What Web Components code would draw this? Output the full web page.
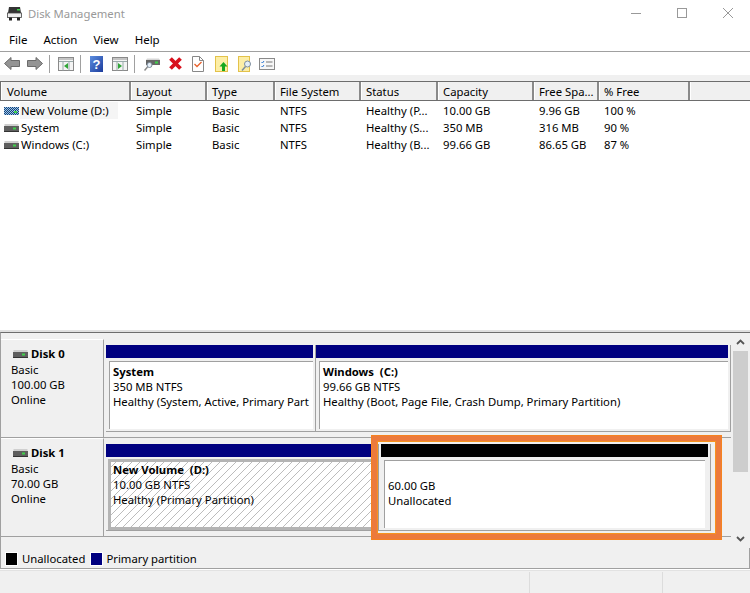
<!DOCTYPE html>
<html><head><meta charset="utf-8"><title>Disk Management</title>
<style>
html,body{margin:0;padding:0;background:#fff}
body{width:750px;height:593px;overflow:hidden;font:11.3px "Noto Sans","Open Sans",sans-serif;color:#000}
</style></head><body>
<dm-app>
  <dm-titlebar>Disk Management</dm-titlebar>
  <dm-menu></dm-menu>
  <dm-toolbar></dm-toolbar>
  <dm-table></dm-table>
  <dm-pane>
    <dm-disk name="Disk 0" kind="Basic" size="100.00 GB" state="Online">
      <dm-part style="width:210px" color="#000080" title1="System" l1="350 MB NTFS" l2="Healthy (System, Active, Primary Part"></dm-part>
      <dm-part style="width:415px" color="#000080" title1="Windows  (C:)" l1="99.66 GB NTFS" l2="Healthy (Boot, Page File, Crash Dump, Primary Partition)"></dm-part>
    </dm-disk>
    <dm-disk name="Disk 1" kind="Basic" size="70.00 GB" state="Online">
      <dm-part style="width:272px" color="#000080" selected title1="New Volume  (D:)" l1="10.00 GB NTFS" l2="Healthy (Primary Partition)"></dm-part>
      <dm-part style="width:333px" color="#000" framed title1="&nbsp;" l1="60.00 GB" l2="Unallocated"></dm-part>
    </dm-disk>
    <dm-highlight></dm-highlight>
  </dm-pane>
  <dm-legend></dm-legend>
  <dm-status></dm-status>
</dm-app>
<script>
function def(name, css, html){
  customElements.define(name, class extends HTMLElement{
    connectedCallback(){
      if(this.shadowRoot) return;
      const r=this.attachShadow({mode:'open'});
      const content = typeof html==='function'?html(this):html;
      r.innerHTML='<style>'+css+'</style>'+content;
    }
  });
}
const DRIVE = `<svg width="15" height="8" viewBox="0 0 15 8"><rect x="0.5" y="0" width="14" height="2" fill="#cfcfcf"/><rect x="0" y="2" width="15" height="5" fill="#5f5f5f"/><rect x="9" y="3.500" width="3" height="2" fill="#3fd24a"/><rect x="0" y="7" width="15" height="1" fill="#333"/></svg>`;
const DRIVE_STRIPED = `<svg width="15" height="8" viewBox="0 0 15 8"><defs><pattern id="p" width="2" height="2" patternUnits="userSpaceOnUse"><rect width="2" height="2" fill="#9fc3e6"/><rect width="1" height="1" fill="#14467e"/><rect x="1" y="1" width="1" height="1" fill="#14467e"/></pattern></defs><rect width="15" height="8" fill="url(#p)"/><rect x="10" y="4" width="3" height="2" fill="#3fd24a"/></svg>`;

def('dm-app',`:host{display:flex;flex-direction:column;width:750px;height:593px;overflow:hidden}`,`<slot></slot>`);

def('dm-titlebar',`:host{display:flex;align-items:center;height:30px;padding-left:7px;color:#999;gap:6px;box-sizing:border-box;padding-bottom:3px;flex:none;overflow:hidden}
 .t{flex:1}.b{display:flex;height:100%;align-items:center;margin-right:-1px;margin-top:-1px}.b svg{display:block;width:46px;height:14px}`,
`<svg width="15" height="15" viewBox="0 0 15 15"><path d="M2 1h11l1 6H1z" fill="#333"/><rect x="10" y="3" width="3" height="1.500" fill="#3fd24a"/><rect x="0.500" y="7" width="14" height="4.500" fill="#eee" stroke="#444" stroke-width=".8"/><rect x="2" y="11.500" width="3" height="3" fill="#222"/><rect x="10" y="11.500" width="3" height="3" fill="#222"/></svg>
<span class="t"><slot></slot></span>
<span class="b">
<svg viewBox="0 0 46 14"><path d="M18 7.500h10" stroke="#999" fill="none"/></svg>
<svg viewBox="0 0 46 14"><rect x="18.500" y="2.500" width="9" height="9" fill="none" stroke="#999"/></svg>
<svg viewBox="0 0 46 14"><path d="M18 2l10 10M28 2L18 12" stroke="#999" fill="none"/></svg>
</span>`);

def('dm-menu',`:host{display:flex;height:22px;align-items:center;padding-left:9px;gap:16px;border-bottom:1px solid #a0a0a0;box-sizing:border-box;padding-bottom:2px;flex:none;font-size:11.5px}`,
`<span>File</span><span>Action</span><span>View</span><span>Help</span>`);

const win=(arrow,m)=>`<svg style="margin-right:${m}px" width="16" height="14" viewBox="0 0 16 14"><rect x=".5" y=".5" width="15" height="13" fill="#f4f4f4" stroke="#8a8a8a"/><rect x="1" y="1" width="14" height="2" fill="#c4c4c4"/><path d="M1 4.500h14M5 4.500v9M11 4.500v9" stroke="#9aa" fill="none"/>${arrow}</svg>`;
def('dm-toolbar',`:host{display:flex;height:23px;align-items:center;padding-left:4px;background:#fff;box-sizing:border-box;flex:none}
 svg{display:block;flex:none}.s{width:1px;height:18px;background:#a0a0a0;flex:none}`,
`<svg width="16" height="13" viewBox="0 0 16 13" style="margin-right:7px"><path d="M7 .5L.5 6.500 7 12.500V9.500h8.500V3.500H7z" fill="#949494" stroke="#6b6b6b"/></svg>
<svg width="16" height="13" viewBox="0 0 16 13" style="margin-right:6px"><path d="M9 .5l6.500 6L9 12.500V9.500H.5V3.500H9z" fill="#949494" stroke="#6b6b6b"/></svg>
<i class="s" style="margin-right:8px"></i>
${win('<path d="M10 6v6L6 9z" fill="#2fa637"/>',6)}
<i class="s" style="margin-right:9px"></i>
<svg width="13" height="16" viewBox="0 0 13 16" style="margin-right:9px"><defs><linearGradient id="h" x1="0" x2="1" y1="0" y2="1"><stop offset="0" stop-color="#5c8ee0"/><stop offset="1" stop-color="#1c3c9c"/></linearGradient></defs><rect width="13" height="16" fill="url(#h)"/><text x="6.500" y="13" font-family="Liberation Sans" font-weight="700" font-size="13" fill="#fff" text-anchor="middle">?</text></svg>
${win('<path d="M6 6v6l4-3z" fill="#2fa637"/>',6)}
<i class="s" style="margin-right:9px"></i>
<svg width="16" height="16" viewBox="0 0 16 16" style="margin-right:8px"><path d="M2 4h14v5H2z" fill="#666"/><path d="M3 2.500h12L16 4H2z" fill="#d6d6d6"/><rect x="11" y="5.500" width="3" height="2" fill="#3fd24a"/><circle cx="5.500" cy="9" r="2.500" fill="#e6eff8" stroke="#7a8a9a"/><path d="M3.500 11L.5 14.500" stroke="#8a8a8a" stroke-width="1.500"/></svg>
<svg width="15" height="15" viewBox="0 0 15 15" style="margin-right:9px"><path d="M2.500 2.500l10 10M12.500 2.500l-10 10" stroke="#d8101c" stroke-width="3.800"/></svg>
<svg width="12" height="16" viewBox="0 0 12 16" style="margin-right:11px"><path d="M.5.500h7l4 4v11H.5z" fill="#fff" stroke="#888"/><path d="M7.500.5v4h4" fill="none" stroke="#888"/><path d="M2.500 8l2.500 2.500L9.500 6" fill="none" stroke="#e8612c" stroke-width="1.300"/></svg>
<svg width="13" height="16" viewBox="0 0 13 16" style="margin-right:10px"><rect x=".5" y=".5" width="12" height="15" fill="#fdeea6" stroke="#e3c24a"/><path d="M8.500 6l4 4.500h-2.500V15H7V10.500H4.500z" fill="#17a81f"/></svg>
<svg width="15" height="16" viewBox="0 0 15 16" style="margin-right:6px"><rect x=".5" y=".5" width="11" height="15" fill="#fdeea6" stroke="#e3c24a"/><circle cx="9.500" cy="8" r="3" fill="#e4eef6" stroke="#7d8d9d"/><path d="M7.500 10.500L4 14.500" stroke="#7d8d9d" stroke-width="1.500"/></svg>
<svg width="16" height="12" viewBox="0 0 16 12"><rect x=".5" y=".5" width="15" height="11" fill="#f7f7f7" stroke="#8a8a8a"/><path d="M2.500 4l1 1 1.500-2M2.500 8l1 1 1.500-2" stroke="#2d78d2" fill="none"/><path d="M7 4h6.500M7 8h6.500" stroke="#777" fill="none"/></svg>`);

const COLS=[130,76,68,86,77,96,65,91,60];
const HEAD=['Volume','Layout','Type','File System','Status','Capacity','Free Spa...','% Free',''];
const ROWS=[
 [DRIVE_STRIPED,'New Volume (D:)','Simple','Basic','NTFS','Healthy (P...','10.00 GB','9.96 GB','100 %'],
 [DRIVE,'System','Simple','Basic','NTFS','Healthy (S...','350 MB','316 MB','90 %'],
 [DRIVE,'Windows (C:)','Simple','Basic','NTFS','Healthy (B...','99.66 GB','86.65 GB','87 %']];
const gridT=COLS.join('px ')+'px';
def('dm-table',`:host{display:block;height:257px;box-sizing:border-box;background:linear-gradient(#f0f0f0 0 6px,#fff 6px);border-bottom:2px solid #e0e0e0;padding-top:6px;flex:none;overflow:hidden}
 .h{display:grid;grid-template-columns:${gridT};height:20px;border-top:1px solid #6d6d6d;border-bottom:1px solid #6d6d6d;box-sizing:border-box;background:#f0f0f0;border-left:1px solid #6d6d6d}
 .h span{border-right:2px solid #8a8a8a;padding-left:4px;line-height:19px;box-sizing:border-box;border-left:1px solid #fff;white-space:nowrap;overflow:hidden}
 .h span:first-child{padding-left:5px}
 .h span:last-child{border-right:0}
 .rows{padding-top:1px}
 .r{display:grid;grid-template-columns:${gridT};height:17px;line-height:17px}
 .r>span{padding-left:6px;white-space:nowrap;overflow:hidden}
 .r>span.v{display:flex;align-items:center;padding-left:4px;gap:1px}
 .v svg{flex:none}
 .sel{background:#f5f5f5;padding:0 5px 0 1px;width:98px;box-sizing:border-box}`,
`<div class="h">${HEAD.map(h=>`<span>${h}</span>`).join('')}</div><div class="rows">${ROWS.map((r,i)=>`<div class="r"><span class="v">${r[0]}<span ${i==0?'class="sel"':'style="padding-left:1px"'}>${r[1]}</span></span>${r.slice(2).map(c=>`<span>${c}</span>`).join('')}</div>`).join('')}</div>`);

def('dm-pane',`:host{display:block;position:relative;height:216px;box-sizing:border-box;background:#f0f0f0;border-top:1px solid #6d6d6d;border-left:1px solid #a0a0a0;padding-top:6px;padding-right:17px;flex:none;overflow:hidden}
 .sb{position:absolute;right:0;top:0;bottom:0;width:17px;background:#f0f0f0;display:flex;flex-direction:column;align-items:flex-start}
 .btn{height:18px;width:15px;display:flex;align-items:center;justify-content:center}
 .th{width:15px;height:121px;background:#cdcdcd}
 .sp{flex:1}`,
`<slot></slot><div class="sb"><div class="btn"><svg width="9" height="6" viewBox="0 0 9 6"><path d="M1 5l3.500-3.500L8 5" fill="none" stroke="#555" stroke-width="1.800"/></svg></div><div class="th"></div><div class="sp"></div><div class="btn"><svg width="9" height="6" viewBox="0 0 9 6"><path d="M1 1l3.500 3.500L8 1" fill="none" stroke="#555" stroke-width="1.800"/></svg></div></div>`);

def('dm-disk',`:host{display:flex;height:99px;box-sizing:border-box;border-bottom:1px solid #a0a0a0;width:730px}
 .l{width:103px;box-sizing:border-box;flex:none;padding:6px 0 0 10px;line-height:15px;border-right:1px solid #a0a0a0;border-top:1px solid #fff}
 .n{display:flex;align-items:center;gap:3px;font-weight:700;margin-left:2px;margin-bottom:1px}
 .p{display:flex;gap:0;padding:6px 0 0 2px}`,
h=>`<div class="l"><div class="n">${DRIVE}<span>${h.getAttribute('name')}</span></div><div>${h.getAttribute('kind')}</div><div>${h.getAttribute('size')}</div><div>${h.getAttribute('state')}</div></div><div class="p"><slot></slot></div>`);

def('dm-part',`:host{display:flex;flex-direction:column;box-sizing:border-box;height:87px;flex:none;border-right:1px solid #a0a0a0;border-bottom:1px solid #a0a0a0;padding-right:1px}
 :host([framed]){border-left:1px solid #a0a0a0;height:87px}
 .bar{height:13px;margin-right:1px;flex:none}
 :host([framed]) .bar{margin-left:2px}
 .o{flex:1;margin:3px 1px 3px 3px;display:flex;min-height:0}
 :host([framed]) .o{margin:3px 4px 3px 5px}
 .b{flex:1;min-width:0;background:#fff;border-top:1px solid #a0a0a0;border-left:1px solid #a0a0a0;padding:2px 0 0 3px;line-height:15px;overflow:hidden;white-space:pre;box-sizing:border-box;height:68px}
 .sel{border:3px solid #b4b4b4;padding:0 0 0 2px;height:71px;margin:-1px 0 0 -1px;background:repeating-linear-gradient(-45deg,#bcbcbc 0 1px,#fff 1px 5.660px)}
 b{display:block;font-weight:700}`,
h=>`<div class="bar" style="background:${h.getAttribute('color')}"></div><div class="o"><div class="b ${h.hasAttribute('selected')?'sel':''}"><b>${h.getAttribute('title1')}</b><div>${h.getAttribute('l1')}</div><div>${h.getAttribute('l2')}</div></div></div>`);

def('dm-highlight',`:host{position:absolute;left:370px;top:102px;width:351px;height:105px;box-sizing:border-box;border:6px solid #ec7a3c;box-shadow:inset 0 0 0 1px #f7931e;outline:1px solid #f58220;outline-offset:-1px;pointer-events:none}`,``);

def('dm-legend',`:host{display:flex;align-items:center;height:21px;box-sizing:border-box;background:#f0f0f0;border:1px solid #a0a0a0;border-width:0 1px 1px 1px;padding-left:5px;flex:none;padding-top:1px}
 i{display:block;width:11px;height:12px;margin-right:4px;flex:none;box-shadow:0 0 0 1px #fff}
 span{margin-right:6px}`,
`<i style="background:#000;margin-right:5px"></i><span>Unallocated</span><i style="background:#000080"></i><span>Primary partition</span>`);

def('dm-status',`:host{display:grid;grid-template-columns:530px 133px 87px;height:23px;box-sizing:border-box;margin-top:1px;background:#f0f0f0;border-top:1px solid #e2e2e2;flex:none}
 div{border-right:1px solid #dcdcdc;margin-top:1px}div:last-child{border:0}`,
`<div></div><div></div><div></div>`);
</script>
</body></html>
